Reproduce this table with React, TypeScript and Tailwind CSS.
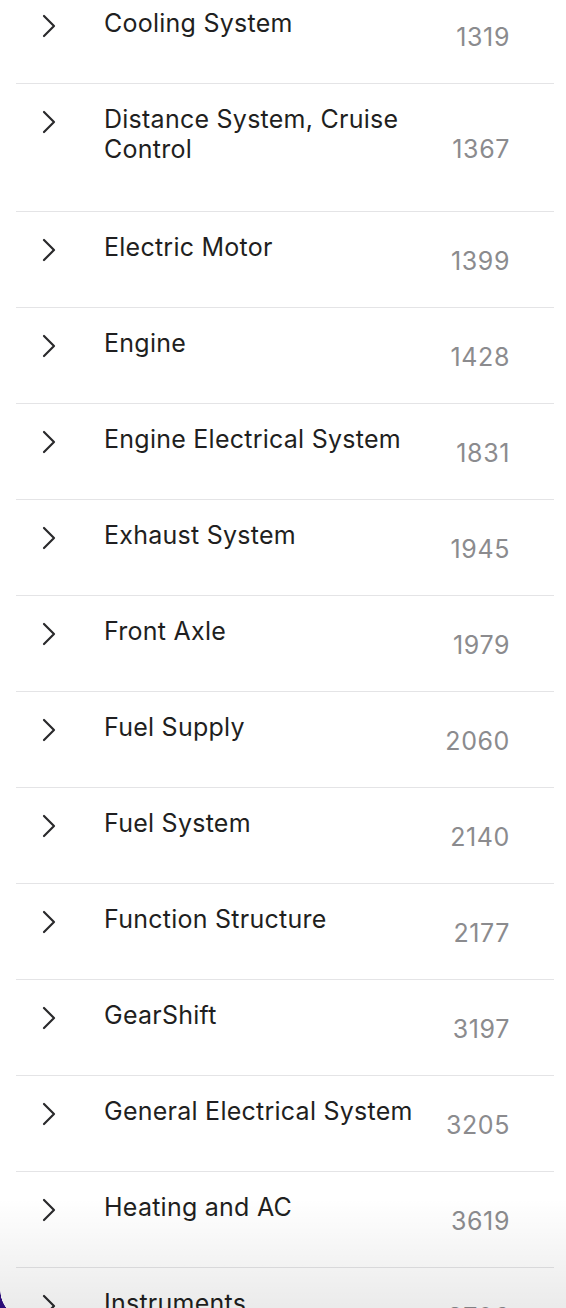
import { FC } from 'react';

type Group = {
    name: string;
    count: string;
    wrap?: boolean;
};

const groups: Group[] = [
    { name: 'Cooling System', count: '1319' },
    { name: 'Distance System, Cruise Control', count: '1367', wrap: true },
    { name: 'Electric Motor', count: '1399' },
    { name: 'Engine', count: '1428' },
    { name: 'Engine Electrical System', count: '1831' },
    { name: 'Exhaust System', count: '1945' },
    { name: 'Front Axle', count: '1979' },
    { name: 'Fuel Supply', count: '2060' },
    { name: 'Fuel System', count: '2140' },
    { name: 'Function Structure', count: '2177' },
    { name: 'GearShift', count: '3197' },
    { name: 'General Electrical System', count: '3205' },
    { name: 'Heating and AC', count: '3619' },
    { name: 'Instruments', count: '3706' },
];

const Chevron: FC = () => (
    <svg className="block" width="14" height="24" viewBox="0 0 14 24" fill="none">
        <path d="M2 2 L12 12 L2 22" stroke="#2a2a2c" strokeWidth="2.2" strokeLinecap="round" strokeLinejoin="round" />
    </svg>
);

const App: FC = () => {
    return (
        <div className="relative h-[1308px] w-full overflow-hidden bg-white" style={{ fontFamily: 'Inter, "Noto Sans", sans-serif' }}>
            <div className="mt-[-12px] pl-4">
                {groups.map((g) => (
                    <div key={g.name} className="flex items-stretch border-b border-[#e4e4e6] w-[538px]">
                        <div className="w-[88px] shrink-0 pl-[26px] pt-[26px]">
                            <Chevron />
                        </div>
                        <div
                            className={`flex-1 pt-[20px] pr-4 text-[25px] leading-[30px] tracking-[0.25px] text-[#1f1f21] ${g.wrap ? 'pb-[47px]' : 'pb-[45px]'}`}
                        >
                            {g.name}
                        </div>
                        <div className="flex items-center pt-[2px] pr-[44px] text-[25px] leading-[30px] tracking-[0.6px] text-[#8b8b8e]">
                            {g.count}
                        </div>
                    </div>
                ))}
            </div>

            {/* shadow from the bar below */}
            <div className="pointer-events-none absolute bottom-0 left-0 h-[110px] w-full bg-gradient-to-b from-transparent to-black/[0.08]" />
            <div className="pointer-events-none absolute bottom-0 left-0 h-[18px] w-[30px] bg-[radial-gradient(circle_at_30px_0px,transparent_29.5px,#2c0c78_30px)]" />
        </div>
    );
};

export default App;
